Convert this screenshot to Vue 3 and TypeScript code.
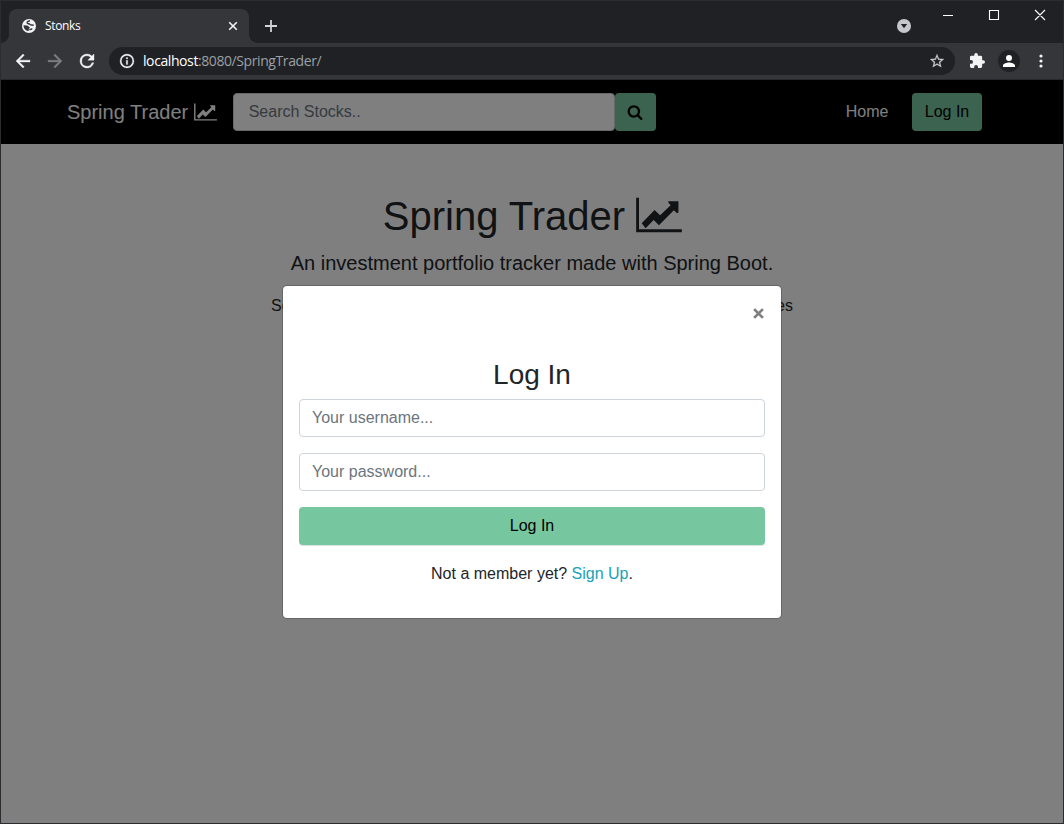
<script setup lang="ts">
import { ref } from 'vue'

const query = ref('')
const username = ref('')
const password = ref('')
const chart =
  'M2048 1536v128H0V128h128v1408h1920zM250 1264L825 670l250 240 470-450-105-120V280h455v520l-75 10-130-130-670 670-235-230-360 370z'
</script>

<template>
  <div class="window">
    <div class="tabstrip">
      <div class="tab">
        <svg class="globe" viewBox="0 0 14 14"><circle cx="7" cy="7" r="7" fill="#f1f3f4" /><path d="M8 1.800C6 2.200 4.800 3 5.300 4.100c.5.900 1.900.3 2.600 1.300.7.900 2 .4 3.800.9M7.300 10.400c1.200.2 2-.5 3-.3" fill="none" stroke="#35363a" stroke-width="1.500" /><path d="M1.500 6.200l3.900.2 2.500 2.200-1.100 1.300-.1 2.200C3.500 11.900 1.600 9.500 1.500 6.200z" fill="#35363a" /></svg>
        <span class="tab-title">Stonks</span>
        <svg class="tab-close" viewBox="0 0 10 10"><path d="M1.2 1.2l7.6 7.6M8.8 1.2L1.2 8.8" stroke="#f1f3f4" stroke-width="1.6" /></svg>
      </div>
      <svg class="plus" viewBox="0 0 12 12"><path d="M6 0v12M0 6h12" stroke="#d0d3d7" stroke-width="1.8" /></svg>
      <div class="grow"></div>
      <svg class="drop" viewBox="0 0 14 14"><circle cx="7" cy="7" r="7" fill="#c4c7cc" /><path d="M3.8 5h6.4L7 9.3z" fill="#202124" /></svg>
      <svg class="controls" viewBox="0 0 104 12"><path d="M0 6.500h10M46.5 1.5h9v9h-9zM92 1l10 10M102 1L92 11" fill="none" stroke="#fff" stroke-width="1.1" /></svg>
    </div>
    <div class="toolbar">
      <svg class="nav-icon back" viewBox="4 4 16 16"><path fill="#f5f5f5" stroke="#f5f5f5" stroke-width=".4" d="M20 11H7.83l5.59-5.59L12 4l-8 8 8 8 1.41-1.41L7.83 13H20z" /></svg>
      <svg class="nav-icon forward" viewBox="4 4 16 16"><path fill="#7c7e82" stroke="#7c7e82" stroke-width=".4" d="M12 4l-1.41 1.41L16.17 11H4v2h12.17l-5.58 5.59L12 20l8-8z" /></svg>
      <svg class="nav-icon" viewBox="4 4 16 16"><path fill="#f5f5f5" stroke="#f5f5f5" stroke-width=".4" d="M17.65 6.35A7.96 7.96 0 0 0 12 4a8 8 0 1 0 7.73 10h-2.08A6 6 0 1 1 12 6c1.66 0 3.14.69 4.22 1.78L13 11h7V4z" /></svg>
      <div class="omnibox">
        <svg class="info" viewBox="2 2 20 20"><path fill="#f1f3f4" stroke="#f1f3f4" stroke-width=".4" d="M11 7h2v2h-2zm0 4h2v6h-2zm1-9a10 10 0 1 0 0 20 10 10 0 0 0 0-20zm0 18a8 8 0 1 1 0-16 8 8 0 0 1 0 16z" /></svg>
        <span class="url"><b>localhost</b>:8080/SpringTrader/</span>
        <svg class="star" viewBox="2 2 20 20"><path fill="#c8cacd" stroke="#c8cacd" stroke-width=".3" d="M22 9.24l-7.19-.62L12 2 9.19 8.63 2 9.24l5.46 4.73L5.82 21 12 17.27 18.18 21l-1.63-7.03zM12 15.4l-3.76 2.27 1-4.28-3.32-2.88 4.38-.38L12 6.1l1.71 4.04 4.38.38-3.32 2.88 1 4.28z" /></svg>
      </div>
      <svg class="puzzle" viewBox="2 1 21 21"><path fill="#f1f3f4" d="M20.5 11H19V7a2 2 0 0 0-2-2h-4V3.500a2.500 2.500 0 0 0-5 0V5H4a2 2 0 0 0-2 2v3.800h1.500a2.700 2.700 0 0 1 0 5.400H2V20a2 2 0 0 0 2 2h3.800v-1.500a2.700 2.700 0 0 1 5.400 0V22H17a2 2 0 0 0 2-2v-4h1.500a2.500 2.500 0 0 0 0-5z" /></svg>
      <div class="avatar"><svg viewBox="4 4 16 16"><path fill="#fff" d="M12 12a4 4 0 1 0 0-8 4 4 0 0 0 0 8zm0 2c-2.670 0-8 1.340-8 4v2h16v-2c0-2.660-5.330-4-8-4z" /></svg></div>
      <svg class="more" viewBox="0 0 4 14"><g fill="#f1f3f4"><circle cx="2" cy="2" r="1.6" /><circle cx="2" cy="7" r="1.6" /><circle cx="2" cy="12" r="1.6" /></g></svg>
    </div>
    <main class="page">
      <nav class="navbar">
        <span class="brand">Spring Trader</span>
        <svg class="brand-icon" viewBox="0 0 2048 1792"><path :d="chart" /></svg>
        <input v-model="query" class="search" placeholder="Search Stocks.." />
        <button class="search-btn" aria-label="Search">
          <svg viewBox="0 0 1792 1792"><path d="M1216 832q0-185-131.500-316.500t-316.500-131.500-316.500 131.500-131.500 316.500 131.500 316.500 316.500 131.500 316.500-131.500 131.500-316.500zm512 832q0 52-38 90t-90 38q-54 0-90-38l-343-342q-179 124-399 124-143 0-273.500-55.500t-225-150-150-225-55.500-273.500 55.500-273.500 150-225 225-150 273.500-55.500 273.500 55.500 225 150 150 225 55.500 273.500q0 220-124 399l343 343q37 37 37 90z" /></svg>
        </button>
        <a class="home">Home</a>
        <button class="btn">Log In</button>
      </nav>
      <section class="hero">
        <h1><span>Spring Trader</span><svg viewBox="0 0 2048 1792"><path :d="chart" /></svg></h1>
        <p class="lead">An investment portfolio tracker made with Spring Boot.</p>
        <p class="summary"><span>Se</span><span>es</span></p>
      </section>
      <div class="backdrop">
        <form class="modal" @submit.prevent>
          <button type="button" class="close" aria-label="Close">
            <svg viewBox="0 0 10 10"><path d="M1 1l8 8M9 1L1 9" stroke="#7f7f7f" stroke-width="2.500" /></svg>
          </button>
          <h2>Log In</h2>
          <input v-model="username" placeholder="Your username..." />
          <input v-model="password" type="password" placeholder="Your password..." />
          <button class="btn submit">Log In</button>
          <p>Not a member yet? <a>Sign Up</a>.</p>
        </form>
      </div>
    </main>
  </div>
</template>

<style scoped>
* { box-sizing: border-box; }
svg { display: block; flex: none; }
h1, h2, p { margin: 0; font-weight: 400; }
button, input { font: inherit; margin: 0; outline: 0; }
.window { width: 1064px; height: 824px; overflow: hidden; display: flex; flex-direction: column; border: solid #2b2c2f; border-width: 0 1px 1px; background: #202124; font: 16px/24px "Liberation Sans", Arial, sans-serif; color: #212529; }
.tabstrip { height: 43px; display: flex; align-items: flex-start; padding: 9px 16px 0 8px; border-top: 1px solid #2b2c2f; }
.tab { position: relative; width: 240px; height: 34px; margin-top: -1px; background: #35363a; border-radius: 8px 8px 0 0; display: flex; align-items: center; padding: 0 11px 0 13px; }
.tab::before, .tab::after { content: ""; position: absolute; bottom: 0; width: 8px; height: 8px; }
.tab::before { left: -8px; background: radial-gradient(circle at 0 0, #202124 7.5px, #35363a 8px); }
.tab::after { right: -8px; background: radial-gradient(circle at 100% 0, #202124 7.5px, #35363a 8px); }
.globe { width: 14px; height: 14px; }
.tab-title { margin-left: 9px; font: 12px/16px "Open Sans", "Noto Sans", sans-serif; letter-spacing: -.35px; color: #fff; flex: 1; }
.tab-close { width: 10px; height: 10px; }
.plus { width: 12px; height: 12px; margin: 10px 0 0 16px; }
.grow { flex: 1; }
.drop { width: 14px; height: 14px; margin-top: 9px; }
.controls { width: 104px; height: 12px; margin: -1px 0 0 32px; }
.toolbar { height: 37px; flex: none; background: #35363a; border-bottom: 1px solid #27282b; display: flex; align-items: center; padding: 0 20px 0 15px; }
.nav-icon { width: 14px; height: 14px; overflow: visible; }
.back, .forward { margin-right: 18px; }
.omnibox { height: 28px; width: 846px; margin-left: 15px; border-radius: 14px; background: #202124; display: flex; align-items: center; padding: 0 11px; }
.info { width: 14px; height: 14px; overflow: visible; }
.url { margin-left: 9px; flex: 1; font: 14px/20px "Open Sans", "Noto Sans", sans-serif; letter-spacing: -.41px; color: #9aa0a6; }
.url b { font-weight: 400; color: #fff; }
.star { width: 14px; height: 14px; }
.puzzle { width: 15px; height: 15px; margin: -1px 0 0 15px; }
.avatar { width: 22px; height: 22px; border-radius: 50%; background: #202124; margin-left: 13px; display: grid; place-items: center; }
.avatar svg { width: 12px; height: 12px; }
.more { width: 4px; height: 14px; margin-left: 19px; }
.page { flex: 1; position: relative; background: #fff; }
.navbar { height: 64px; background: #000; display: flex; align-items: center; padding: 0 81px 0 66px; color: #fff; }
.brand { font-size: 20px; line-height: 30px; }
.brand-icon { width: 23px; height: 20px; margin: 0 16px 0 6px; fill: #fff; }
.search { width: 382px; height: 38px; border: 1px solid #ced4da; border-radius: 4px; padding: 6px 15px 6px 14.500px; background: #fff; color: #495057; }
input::placeholder { color: #6c757d; opacity: 1; }
.search-btn { width: 41px; height: 38px; border: 0; border-radius: 4px; background: #76c79f; display: grid; place-items: center; padding: 0 1px 1px 0; }
.search-btn svg { width: 16px; height: 16px; }
.home { margin-left: auto; margin-right: 23.500px; }
.btn { height: 38px; width: 70px; padding: 0; border: 0; border-radius: 4px; background: #76c79f; color: #000; }
.hero { display: flex; flex-direction: column; align-items: center; padding-top: 48px; }
h1 { display: flex; font-size: 40px; line-height: 48px; }
h1 svg { width: 46px; height: 40px; margin: 3px -1px 0 11px; fill: #212529; }
.lead { font-size: 20px; line-height: 30px; margin-top: 8px; }
.summary { display: flex; justify-content: space-between; width: 522px; margin-top: 16px; }
.backdrop { position: absolute; inset: 0; background: rgba(0, 0, 0, .5); display: flex; justify-content: center; align-items: flex-start; padding-top: 205px; }
.modal { width: 500px; height: 334px; border: 1px solid rgba(0, 0, 0, .2); border-radius: 5px; background: #fff; background-clip: padding-box; padding: 16px; display: flex; flex-direction: column; }
.close { align-self: flex-end; display: flex; align-items: flex-start; border: 0; background: none; padding: 6px 2px; height: 56px; }
.close svg { width: 11px; height: 11px; margin-right: -.5px; }
h2 { font-size: 28px; line-height: 33px; text-align: center; margin-bottom: 8px; }
.modal input { width: 100%; height: 38px; border: 1px solid #ced4da; border-radius: 4px; padding: 6px 12px; margin-bottom: 16px; }
.submit { width: 100%; flex: none; box-shadow: 0 1px 0 #dde3e4; }
.modal p { text-align: center; margin-top: 17px; }
.modal a { color: #17a2b8; }
</style>
